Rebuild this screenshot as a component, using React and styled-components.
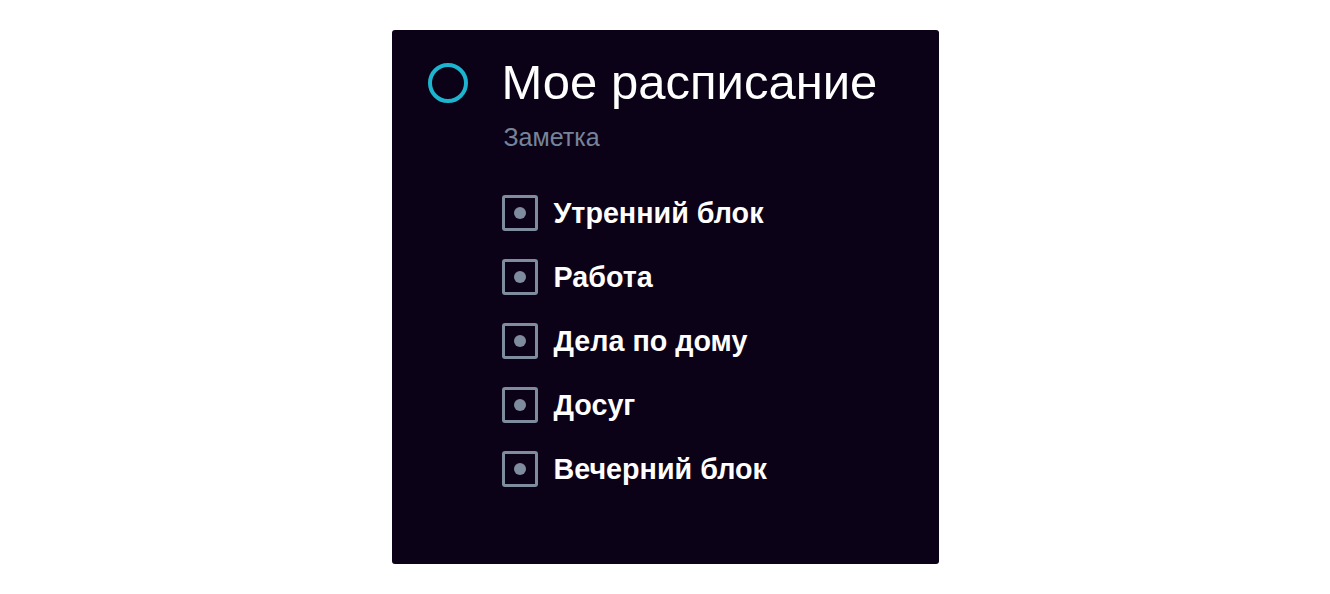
import React from 'react';
import styled, { createGlobalStyle } from 'styled-components';

const GlobalStyle = createGlobalStyle`
  body {
    margin: 0;
    background: #ffffff;
    font-family: "Liberation Sans", Arial, sans-serif;
  }
`;

const items = ['Утренний блок', 'Работа', 'Дела по дому', 'Досуг', 'Вечерний блок'];

function App() {
  return (
    <>
      <GlobalStyle />
      <Page>
        <Card>
          <Header>
            <Ring />
            <Title>Мое расписание</Title>
          </Header>
          <Body>
            <Note>Заметка</Note>
            <List>
              {items.map((item) => (
                <Item key={item}>
                  <Box>
                    <Dot />
                  </Box>
                  <Label>{item}</Label>
                </Item>
              ))}
            </List>
          </Body>
        </Card>
      </Page>
    </>
  );
}

const Page = styled.div`
  display: flex;
  justify-content: center;
  padding-top: 30px;
`;

const Card = styled.div`
  width: 547px;
  height: 534px;
  box-sizing: border-box;
  background: #0c0217;
  border-radius: 3px;
  padding: 25px 36px;
`;

const Header = styled.div`
  display: flex;
  align-items: center;
  gap: 34px;
`;

const Ring = styled.div`
  width: 40px;
  height: 40px;
  box-sizing: border-box;
  border: 4px solid #1db4cf;
  border-radius: 50%;
  flex-shrink: 0;
  margin-top: 2px;
`;

const Title = styled.h1`
  margin: 0;
  font-size: 49px;
  font-weight: 400;
  line-height: 54px;
  color: #ffffff;
`;

const Body = styled.div`
  padding-left: 74px;
`;

const Note = styled.div`
  margin-top: 13px;
  margin-left: 2px;
  font-size: 25px;
  line-height: 30px;
  color: #76849a;
`;

const List = styled.ul`
  list-style: none;
  margin: 43px 0 0;
  padding: 0;
  display: flex;
  flex-direction: column;
  gap: 28px;
`;

const Item = styled.li`
  display: flex;
  align-items: center;
  gap: 16px;
`;

const Box = styled.span`
  width: 36px;
  height: 36px;
  box-sizing: border-box;
  border: 3px solid #7f8c9e;
  border-radius: 3px;
  display: flex;
  align-items: center;
  justify-content: center;
  flex-shrink: 0;
`;

const Dot = styled.span`
  width: 12px;
  height: 12px;
  border-radius: 50%;
  background: #7f8c9e;
`;

const Label = styled.span`
  font-size: 28.7px;
  font-weight: 700;
  color: #ffffff;
  line-height: 30px;
`;

export default App;
